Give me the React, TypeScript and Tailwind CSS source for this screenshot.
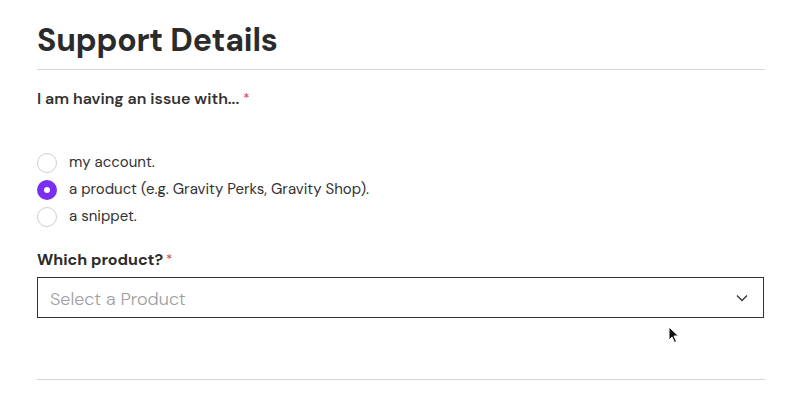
import React from "react";

const font = { fontFamily: '"DM Sans", Inter, "Noto Sans", sans-serif' };

function Radio({ checked, label }: { checked?: boolean; label: string }) {
  return (
    <label className="flex items-center h-[27px] gap-[12px]">
      {checked ? (
        <span className="w-[20px] h-[20px] rounded-full bg-[#7b2ff0] flex items-center justify-center shrink-0">
          <span className="w-[6px] h-[6px] rounded-full bg-white" />
        </span>
      ) : (
        <span className="w-[20px] h-[20px] rounded-full border border-[#cfcfcf] bg-white shrink-0" />
      )}
      <span className="text-[15px] text-[#333]">{label}</span>
    </label>
  );
}

export default function App() {
  return (
    <div className="relative w-[803px] h-[404px] bg-white overflow-hidden" style={font}>
      <div className="pl-[37px] pr-[38px] pt-[22px]">
        <h1 className="text-[32px] leading-[36px] font-bold text-[#2b2b2b] tracking-[-0.2px]">Support Details</h1>
        <div className="mt-[11px] border-t border-[#d6d6d6]" />
        <div className="mt-[19px] h-[20px] flex items-center text-[16px] font-semibold text-[#333]">
          I am having an issue with...
          <span className="ml-[4px] text-[#c0475f] font-normal text-[13px]">*</span>
        </div>
        <div className="mt-[40px] flex flex-col">
          <Radio label="my account." />
          <Radio checked label="a product (e.g. Gravity Perks, Gravity Shop)." />
          <Radio label="a snippet." />
        </div>
        <div className="mt-[20px] h-[20px] flex items-center text-[16px] font-bold text-[#2b2b2b]">
          Which product?
          <span className="ml-[3px] text-[#c0475f] font-normal text-[13px]">*</span>
        </div>
        <div className="mt-[7px] mr-[1px] h-[41px] border border-[#333] flex items-center justify-between pl-[12px] pr-[15px]">
          <span className="pt-[3px] text-[18px] font-light text-[#a0a0a0]">Select a Product</span>
          <svg width="12" height="8" viewBox="0 0 12 8" fill="none">
            <path d="M1 1.5L6 6.5L11 1.5" stroke="#333" strokeWidth="1.3" />
          </svg>
        </div>
        <div className="mt-[61px] border-t border-[#d6d6d6]" />
      </div>
      <svg className="absolute left-[668px] top-[326px]" width="12" height="18" viewBox="0 0 12 18">
        <path d="M1 1 L1 14 L4 11 L6.5 16.5 L8.5 15.5 L6 10 L10.5 10 Z" fill="#111" stroke="#fff" strokeWidth="1" />
      </svg>
    </div>
  );
}
